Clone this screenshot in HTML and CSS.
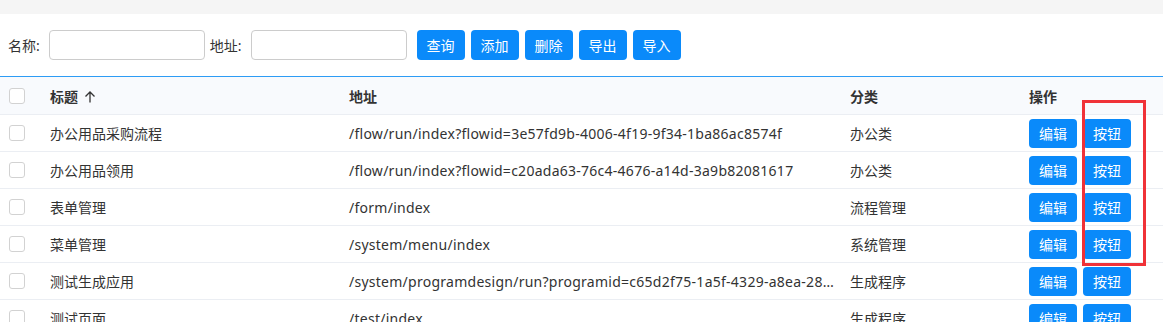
FILE: index.html
```html
<!DOCTYPE html>
<html lang="zh-CN">
<head>
    <meta charset="UTF-8">
    <meta name="viewport" content="width=device-width, initial-scale=1.0">
    <title>应用管理</title>
    <link rel="stylesheet" href="styles.css">
</head>
<body>
    <div class="top-band"></div>

    <div class="toolbar">
        <label class="field-label">名称:</label>
        <input type="text" class="field-input">
        <label class="field-label">地址:</label>
        <input type="text" class="field-input">
        <div class="toolbar-buttons">
            <button class="btn">查询</button>
            <button class="btn">添加</button>
            <button class="btn">删除</button>
            <button class="btn">导出</button>
            <button class="btn">导入</button>
        </div>
    </div>

    <div class="grid-wrap">
        <table class="grid">
            <colgroup>
                <col class="col-check">
                <col class="col-title">
                <col class="col-url">
                <col class="col-type">
                <col class="col-op">
            </colgroup>
            <thead>
                <tr>
                    <th><span class="check"></span></th>
                    <th>标题 <svg class="sort-icon" width="12" height="13" viewBox="0 0 12 13"><path d="M6 12.5V2M1.5 6.5L6 2l4.5 4.5" fill="none" stroke="#333" stroke-width="1.3"/></svg></th>
                    <th>地址</th>
                    <th>分类</th>
                    <th>操作</th>
                </tr>
            </thead>
            <tbody>
                <tr>
                    <td><span class="check"></span></td>
                    <td>办公用品采购流程</td>
                    <td class="url">/flow/run/index?flowid=3e57fd9b-4006-4f19-9f34-1ba86ac8574f</td>
                    <td>办公类</td>
                    <td class="ops"><button class="btn btn-sm">编辑</button><button class="btn btn-sm">按钮</button></td>
                </tr>
                <tr>
                    <td><span class="check"></span></td>
                    <td>办公用品领用</td>
                    <td class="url">/flow/run/index?flowid=c20ada63-76c4-4676-a14d-3a9b82081617</td>
                    <td>办公类</td>
                    <td class="ops"><button class="btn btn-sm">编辑</button><button class="btn btn-sm">按钮</button></td>
                </tr>
                <tr>
                    <td><span class="check"></span></td>
                    <td>表单管理</td>
                    <td class="url">/form/index</td>
                    <td>流程管理</td>
                    <td class="ops"><button class="btn btn-sm">编辑</button><button class="btn btn-sm">按钮</button></td>
                </tr>
                <tr>
                    <td><span class="check"></span></td>
                    <td>菜单管理</td>
                    <td class="url">/system/menu/index</td>
                    <td>系统管理</td>
                    <td class="ops"><button class="btn btn-sm">编辑</button><button class="btn btn-sm">按钮</button></td>
                </tr>
                <tr>
                    <td><span class="check"></span></td>
                    <td>测试生成应用</td>
                    <td class="url">/system/programdesign/run?programid=c65d2f75-1a5f-4329-a8ea-28b1c0d4e9f2</td>
                    <td>生成程序</td>
                    <td class="ops"><button class="btn btn-sm">编辑</button><button class="btn btn-sm">按钮</button></td>
                </tr>
                <tr>
                    <td><span class="check"></span></td>
                    <td>测试页面</td>
                    <td class="url">/test/index</td>
                    <td>生成程序</td>
                    <td class="ops"><button class="btn btn-sm">编辑</button><button class="btn btn-sm">按钮</button></td>
                </tr>
            </tbody>
        </table>
        <!-- highlight box around the custom button column -->
        <div class="highlight"></div>
    </div>
</body>
</html>
```

FILE: styles.css
```css
body {
    margin: 0;
    font-family: "Noto Sans", "Noto Sans CJK SC", sans-serif;
    font-size: 14px;
    color: #333;
    background: #fff;
    overflow: hidden;
}
.top-band {
    height: 14px;
    background: #f5f5f5;
}
.toolbar {
    height: 62px;
    display: flex;
    align-items: center;
    padding: 0 8px;
}
.field-label {
    margin-right: 9px;
}
.field-input {
    width: 156px;
    height: 30px;
    box-sizing: border-box;
    border: 1px solid #ccc;
    border-radius: 4px;
    margin-right: 5px;
    outline: none;
}
.toolbar-buttons {
    display: flex;
    gap: 6px;
    margin-left: 5px;
}
.btn {
    width: 48px;
    height: 30px;
    border: none;
    border-radius: 4px;
    background: #0a8afa;
    color: #fff;
    font-family: "Noto Sans CJK SC", sans-serif;
    font-size: 14px;
    padding: 0;
    cursor: pointer;
}
.btn-sm {
    height: 29px;
}
.grid-wrap {
    position: relative;
    border-top: 1px solid #2d9cf5;
}
.grid {
    width: 100%;
    table-layout: fixed;
    border-collapse: collapse;
}
.col-check { width: 40px; }
.col-title { width: 299px; }
.col-url { width: 501px; }
.col-type { width: 179px; }
.col-op { width: 144px; }
th, td {
    text-align: left;
    padding: 0 10px;
    border-bottom: 1px solid #ebeef3;
    white-space: nowrap;
}
th {
    height: 37px;
    background: #f8fafd;
    font-weight: bold;
    color: #333;
}
td {
    height: 36px;
}
th:first-child, td:first-child {
    padding: 0 0 0 9px;
}
.url {
    overflow: hidden;
    text-overflow: ellipsis;
    letter-spacing: 0.26px;
    padding-right: 3px;
}
.check {
    display: block;
    width: 16px;
    height: 16px;
    box-sizing: border-box;
    border: 1px solid #d2d2d2;
    border-radius: 3px;
    background: #fff;
}
.sort-icon {
    vertical-align: -1px;
    margin-left: 2px;
}
.ops .btn + .btn {
    margin-left: 6px;
}
.highlight {
    position: absolute;
    left: 1082px;
    top: 23px;
    width: 58px;
    height: 160px;
    border: 3px solid #f03238;
}
```
